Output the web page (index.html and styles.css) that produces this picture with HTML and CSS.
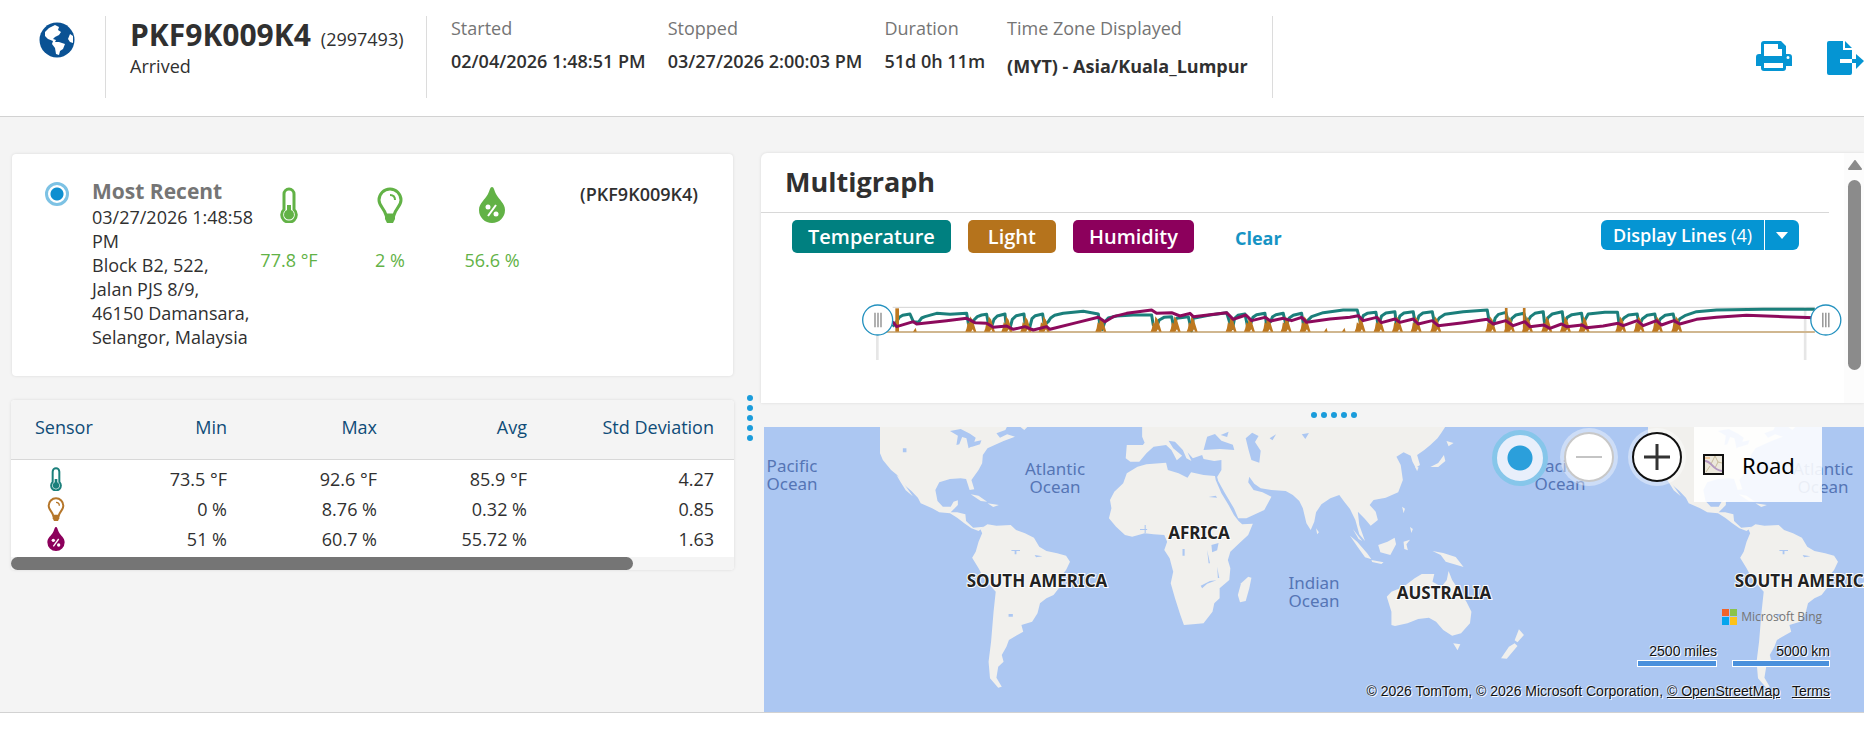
FILE: index.html
```html
<!DOCTYPE html>
<html lang="en">
<head>
<meta charset="utf-8">
<title>Shipment PKF9K009K4</title>
<link rel="stylesheet" href="styles.css">
</head>
<body>
<svg class="defs" aria-hidden="true">
  <symbol id="thermo" viewBox="0 0 18 36">
    <path d="M9 2a5 5 0 0 0-5 5v15.500a7.300 7.300 0 1 0 10 0V7a5 5 0 0 0-5-5z" fill="none" stroke="currentColor" stroke-width="3"/>
    <path d="M7 18h4v5a5 5 0 1 1-4 0z" fill="currentColor"/>
  </symbol>
  <symbol id="bulb" viewBox="0 0 26 36">
    <path d="M13 2A11 11 0 0 0 2 13c0 6 5 8 7 15h8c2-7 7-9 7-15A11 11 0 0 0 13 2z" fill="none" stroke="currentColor" stroke-width="3"/>
    <path d="M8 27h10v5l-2 4h-6l-2-4z" fill="currentColor"/>
    <path d="M13 8c3 0 5 2 5 5" fill="none" stroke="currentColor" stroke-width="2"/>
  </symbol>
  <symbol id="drop" viewBox="0 0 26 36">
    <path d="M13 0c2 0 2 3 4 7 3 6 9 9 9 16a13 13 0 0 1-26 0C0 16 6 13 9 7c2-4 2-7 4-7z" fill="currentColor"/>
    <path d="M9 29l8-11" stroke="#fff" stroke-width="2"/>
    <circle cx="9" cy="20" r="2.500" fill="#fff"/><circle cx="17" cy="27" r="2.500" fill="#fff"/>
  </symbol>
</svg>

<header class="topbar">
  <div class="brand">
    <svg class="globe" viewBox="0 0 36 36" aria-hidden="true">
      <circle cx="18" cy="18" r="17.500" fill="#0a5294"/>
      <path d="M16 3L20 5 19 8 22 10 20 13 16 15 14 17 17 18 16 20 20 20 26 22 24 27 21 29 20 33 17 32 16 26 13 22 14 19 9 17 6 14 6 10 10 6z" fill="#fff"/>
      <path d="M31 12l3 2v7l-3-1-2-3z" fill="#fff"/>
    </svg>
  </div>
  <div class="ident">
    <div class="ident-line"><h1>PKF9K009K4</h1><span>(2997493)</span></div>
    <div>Arrived</div>
  </div>
  <dl class="facts">
    <div><dt>Started</dt><dd>02/04/2026 1:48:51 PM</dd></div>
    <div><dt>Stopped</dt><dd>03/27/2026 2:00:03 PM</dd></div>
    <div><dt>Duration</dt><dd>51d 0h 11m</dd></div>
    <div class="zone"><dt>Time Zone Displayed</dt><dd>(MYT) - Asia/Kuala_Lumpur</dd></div>
  </dl>
  <div class="tools">
    <button type="button" aria-label="Print">
      <svg width="36" height="30" viewBox="0 0 36 30"><path fill="#0595d3" fill-rule="evenodd" d="M8 0h17l5 5v8h3a3 3 0 0 1 3 3v9h-6v2a3 3 0 0 1-3 3H8a3 3 0 0 1-3-3v-2H0v-9a3 3 0 0 1 3-3h2V3a3 3 0 0 1 3-3zM8 3v12h18V8h-4V3zM8 22v5h19v-5zM32 15a1.500 1.500 0 1 0 0 3 1.500 1.500 0 0 0 0-3z"/></svg>
    </button>
    <button type="button" aria-label="Export">
      <svg width="37" height="34" viewBox="0 0 37 34"><path fill="#0595d3" d="M2 0h14v9h9v9H13v4h12v10a2 2 0 0 1-2 2H2a2 2 0 0 1-2-2V2a2 2 0 0 1 2-2zM18 0l7 7h-7zM25 18h4v-5l8 7-8 8v-6h-4z"/></svg>
    </button>
  </div>
</header>

<main class="board">
  <section class="left">
    <article class="card recent">
      <input class="pick" type="radio" name="point" aria-label="Most Recent" checked>
      <div class="where">
        <h2>Most Recent</h2>
        <p>03/27/2026 1:48:58 PM</p>
        <p>Block B2, 522,<br>Jalan PJS 8/9,<br>46150 Damansara,<br>Selangor, Malaysia</p>
      </div>
      <div class="reading"><svg class="big narrow"><use href="#thermo"/></svg><span>77.8 °F</span></div>
      <div class="reading"><svg class="big"><use href="#bulb"/></svg><span>2 %</span></div>
      <div class="reading"><svg class="big"><use href="#drop"/></svg><span>56.6 %</span></div>
      <strong class="tag">(PKF9K009K4)</strong>
    </article>
    <div class="card stats">
      <table>
        <thead><tr><th>Sensor</th><th>Min</th><th>Max</th><th>Avg</th><th>Std Deviation</th></tr></thead>
        <tbody>
          <tr><td><svg class="small teal"><use href="#thermo"/></svg></td><td>73.5 °F</td><td>92.6 °F</td><td>85.9 °F</td><td>4.27</td></tr>
          <tr><td><svg class="small amber"><use href="#bulb"/></svg></td><td>0 %</td><td>8.76 %</td><td>0.32 %</td><td>0.85</td></tr>
          <tr><td><svg class="small plum"><use href="#drop"/></svg></td><td>51 %</td><td>60.7 %</td><td>55.72 %</td><td>1.63</td></tr>
        </tbody>
      </table>
      <div class="hscroll"><div class="hthumb"></div></div>
    </div>
  </section>

  <div class="grip vertical"><i></i><i></i><i></i><i></i><i></i></div>

  <section class="right">
    <div class="graph">
      <div class="graph-body">
        <h2>Multigraph</h2>
        <div class="filters">
          <button type="button" class="chip bg-teal">Temperature</button>
          <button type="button" class="chip bg-amber">Light</button>
          <button type="button" class="chip bg-plum">Humidity</button>
          <button type="button" class="clear">Clear</button>
          <div class="split">
            <button type="button"><b>Display Lines</b> (4)</button>
            <button type="button" class="arrow" aria-label="More"><svg width="12" height="7" viewBox="0 0 12 7"><path d="M0 0h12L6 7z" fill="#fff"/></svg></button>
          </div>
        </div>
        <svg class="chart" viewBox="36 42 2940 170" preserveAspectRatio="xMinYMin meet" aria-hidden="true">
          <defs>
            <path id="spike" d="M-16 0l4-10 3-18 5 4 2-22 8 10 4 14 7 22h-7l-4-7-5 7z" fill="#bd7820"/>
            <path id="blip" d="M-6 0L2-12 5 0z" fill="#bd7820"/>
          </defs>
          <path d="M128 52H2895" stroke="#d3d3d3" stroke-width="3"/>
          <path d="M82 130V210M2866 52V210" stroke="#e6e6e6" stroke-width="8"/>
          <path d="M110 126H2895" stroke="#d0b790" stroke-width="6"/>
          <path d="M128 110L140 95 148 82 158 76 180 72 190 95 205 97 215 84 225 80 260 70 300 73 350 70 355 100 365 110 372 90 382 80 395 75 410 73 414 95 425 110 432 88 442 78 465 72 468 100 480 115 487 88 499 77 522 72 525 100 540 110 546 86 556 77 578 72 583 105 595 95 602 84 614 76 640 70 700 64 745 72 750 105 757 118 765 95 775 84 800 78 850 75 905 75 910 105 920 110 928 90 942 82 965 80 970 105 980 85 1015 80 1025 122 1030 85 1080 75 1130 68 1140 100 1148 115 1154 85 1164 76 1185 72 1192 105 1203 100 1209 82 1220 74 1245 70 1250 105 1262 95 1268 80 1278 74 1300 70 1308 105 1318 84 1330 76 1355 70 1360 100 1370 95 1385 80 1420 68 1480 60 1522 60 1532 100 1540 77 1552 70 1578 67 1585 108 1595 78 1608 69 1635 65 1640 108 1650 78 1662 69 1690 65 1697 108 1707 78 1719 69 1747 65 1755 105 1768 84 1785 73 1840 65 1912 60 1918 95 1930 105 1936 84 1946 73 1968 67 1978 108 1986 85 1998 75 2022 70 2030 100 2042 80 2055 70 2080 65 2085 108 2095 82 2107 72 2137 65 2142 105 2152 82 2166 74 2195 70 2200 100 2215 72 2265 67 2303 67 2308 105 2322 84 2336 75 2362 72 2368 108 2378 86 2392 76 2415 72 2422 105 2432 86 2446 76 2470 72 2478 106 2490 86 2505 77 2540 65 2600 60 2740 58 2895 58" fill="none" stroke="#1b7f7b" stroke-width="9" stroke-linejoin="round"/>
          <path d="M136 125V55h11v70z" fill="#bd7820"/><path d="M1965 125V54h8v71zM2019 125V54h8v71z" fill="#bd7820"/>
          <g>
            <use href="#blip" x="195" y="125"/><use href="#spike" x="362" y="125"/><use href="#spike" x="418" y="125"/><use href="#spike" x="470" y="125"/><use href="#spike" x="527" y="125"/><use href="#spike" x="582" y="125"/><use href="#spike" x="752" y="125"/><use href="#spike" x="918" y="125"/><use href="#spike" x="975" y="125"/><use href="#spike" x="1026" y="125"/><use href="#spike" x="1143" y="125"/><use href="#spike" x="1198" y="125"/><use href="#spike" x="1253" y="125"/><use href="#spike" x="1308" y="125"/><use href="#spike" x="1365" y="125"/><use href="#blip" x="1428" y="125"/><use href="#blip" x="1482" y="125"/><use href="#spike" x="1530" y="125"/><use href="#spike" x="1587" y="125"/><use href="#spike" x="1642" y="125"/><use href="#spike" x="1698" y="125"/><use href="#spike" x="1757" y="125"/><use href="#spike" x="1922" y="125"/><use href="#spike" x="1978" y="125"/><use href="#spike" x="2032" y="125"/><use href="#spike" x="2090" y="125"/><use href="#spike" x="2146" y="125"/><use href="#spike" x="2202" y="125"/><use href="#spike" x="2312" y="125"/><use href="#spike" x="2367" y="125"/><use href="#spike" x="2422" y="125"/><use href="#spike" x="2480" y="125"/>
          </g>
          <path d="M128 95L140 110 190 95 200 102 290 92 350 85 375 98 410 100 430 112 470 108 490 118 525 110 550 120 590 110 600 118 680 98 745 82 765 95 790 80 830 70 905 60 920 70 965 68 990 78 1020 70 1030 80 1130 68 1150 88 1188 75 1205 92 1245 82 1262 93 1300 85 1325 92 1355 82 1370 97 1440 87 1500 82 1525 77 1540 92 1580 82 1595 98 1635 87 1650 97 1690 87 1705 102 1747 92 1765 107 1840 98 1912 88 1930 102 1968 92 1990 107 2025 95 2040 110 2082 105 2100 115 2135 102 2150 110 2197 105 2210 113 2260 108 2305 100 2320 107 2362 92 2380 107 2420 92 2435 105 2472 92 2490 102 2540 88 2600 82 2690 76 2800 80 2895 83" fill="none" stroke="#8c0a5c" stroke-width="9" stroke-linejoin="round"/>
          <g fill="#fff" stroke="#2391bf" stroke-width="4"><circle cx="83" cy="90" r="45"/><circle cx="2928" cy="90" r="45"/></g>
          <path d="M75 68v44M84 68v44M93 68v44M2919 68v44M2928 68v44M2937 68v44" stroke="#8a8a8a" stroke-width="4"/>
        </svg>
      </div>
      <div class="vscroll"><svg width="14" height="10" viewBox="0 0 14 10"><path d="M7 1l6 8H1z" fill="#8b8b8b" stroke="#8b8b8b" stroke-width="2" stroke-linejoin="round"/></svg><div class="vthumb"></div></div>
    </div>
    <div class="grip"><i></i><i></i><i></i><i></i><i></i></div>
    <div class="map">
      <svg class="world" viewBox="764 427 1100 285" preserveAspectRatio="xMinYMin slice" role="img" aria-label="World map">
        <defs>
          <g id="land" transform="translate(750 395) scale(.35714 .33333)">
            <g fill="#f1f0ed">
            <path d="M364 90L364 175 372 195 395 225 412 240 430 268 452 288 470 308 478 325 510 340 530 352 560 355 580 368 600 385 620 400 640 408 655 395 625 398 605 378 603 358 580 352 562 352 582 330 582 316 570 320 562 335 540 335 525 318 519 285 530 262 560 252 590 250 605 252 615 285 628 283 620 255 640 225 650 205 652 180 665 160 685 150 710 138 742 125 720 118 700 128 690 115 715 105 722 90z"/>
            <path d="M410 240l12 12 22 34 12 18-20-18-14-24zM618 298l22 4 24 18-18-2zM665 325l32 5-16 6zM750 90h32l-14 15z"/>
            <path d="M645 402L665 388 690 392 730 390 745 405 770 415 795 428 810 455 830 468 860 475 885 482 896 500 885 525 870 545 868 575 850 600 830 610 812 625 805 655 790 680 760 690 765 710 745 722 725 735 718 755 705 780 710 800 695 815 690 848 705 875 695 878 672 850 668 800 675 740 682 650 688 590 655 550 640 520 622 488 632 470 640 440 650 415z"/>
            <path d="M1085 215L1110 208 1165 203 1170 225 1200 235 1225 248 1235 232 1270 240 1302 243 1304 255 1320 295 1340 330 1355 360 1368 378 1378 388 1408 386 1395 420 1370 445 1345 470 1338 495 1345 520 1342 555 1315 580 1315 610 1300 625 1295 650 1270 685 1240 688 1215 690 1205 660 1190 610 1178 565 1185 530 1175 490 1160 465 1168 440 1160 420 1130 418 1105 415 1070 425 1050 420 1025 395 1005 370 1012 340 1008 315 1020 290 1045 265 1055 235z"/>
            <path d="M1395 545l9 3-6 32-10 38-16 4-6-22 9-35z"/>
            <path d="M1055 150L1100 150 1105 143 1098 125 1098 90 1950 90 1935 115 1925 130 1905 150 1888 165 1868 180 1876 210 1864 218 1855 200 1850 182 1830 172 1810 185 1822 210 1828 255 1815 292 1780 308 1746 315 1735 330 1752 350 1758 375 1738 392 1722 372 1702 350 1706 390 1722 438 1706 418 1695 375 1680 342 1665 322 1650 300 1625 310 1600 328 1585 352 1580 380 1570 405 1558 385 1548 340 1538 318 1520 300 1500 288 1460 285 1430 280 1412 266 1398 245 1395 262 1410 285 1435 292 1460 305 1440 345 1390 370 1367 370 1355 340 1330 295 1311 258 1308 246 1320 225 1320 195 1300 198 1270 192 1266 180 1240 190 1225 172 1236 198 1222 190 1212 165 1190 140 1172 137 1185 160 1210 182 1195 196 1180 165 1165 150 1130 155 1110 175 1090 200 1065 200 1052 190z"/>
            <path d="M1585 400l8 12-5 6zM1680 422l20 18 28 35 12 18-18-6-20-30zM1740 495l34 7-6 5-26-6zM1759 450l26-10 20-12 4 20-16 32-28-8zM1830 440l18-6-10 14 4 18-10-4zM1911 468l30 6 35 12 22 30-26-8-24-8-14-20zM1826 335l8 6-4 14zM1848 396l8 6-4 12zM1688 402l26 36-10-6z"/>
            <path d="M1783 605L1796 590 1830 575 1861 550 1881 537 1916 537 1911 560 1936 575 1951 555 1956 528 1966 555 1981 580 2006 620 2020 650 2016 685 1991 715 1966 722 1941 705 1921 680 1901 668 1871 672 1841 685 1806 693 1796 690 1796 650z"/>
            <path d="M1969 745l20 3-8 18zM2153 703l14 17-18 22-8-6zM2141 745l8 8-30 38-16-1 22-35zM1950 138l20 6-14 10zM1943 180l4 18-20 18-22 0 22-12z"/>
            <path d="M1862 215l10 2-4 12z"/>
            </g>
            <g fill="#acc7f2">
            <path d="M560 108l30-6 26 14 16 12-8 24-12 8-6-30-12-4-8 22-8 2 4-28zM622 142l26-6-4 12-24 8z"/>
            <path d="M1270 165l10-40 22-8 18 20 32 12 4 16-40-3zM1318 120l22-10-4 16z"/>
            <path d="M1388 130l18-17 18 10-10 18 16 26-4 36-22-8-8-30zM1455 130l18-12-10 18zM1545 118l20-4-10 18z"/>
            <path d="M1292 450l20-6-4 22-14 6zM1280 465l8 40-4 0zM1308 515l6 34-4 0zM1262 572l26-14 18-2-26 10-14 14zM1284 306l20-4 4 6z"/>
            <path d="M428 160h10v12h-10zM732 465h24v3h-10v10h-5v-10h-9zM724 657h12v8h-12zM1105 390h3v24h-3zM1092 402h20v3h-20zM797 480l22 4-18 3zM1211 462h6v20h-6z"/>
            </g>
          </g>
          <g id="names">
            <g class="sea"><text x="792" y="472">Pacific</text><text x="792" y="490">Ocean</text><text x="1055" y="475">Atlantic</text><text x="1055" y="493">Ocean</text><text x="1314" y="589">Indian</text><text x="1314" y="607">Ocean</text></g>
            <g class="continent"><text x="1037" y="587">SOUTH AMERICA</text><text x="1199" y="539">AFRICA</text><text x="1444" y="599">AUSTRALIA</text></g>
          </g>
        </defs>
        <use href="#land"/><use href="#land" x="768"/>
        <use href="#names"/><use href="#names" x="768"/>
      </svg>
      <div class="controls">
        <button type="button" class="locate" aria-label="Locate"></button>
        <button type="button" class="round off" aria-label="Zoom out"><svg width="26" height="26" viewBox="0 0 26 26"><path d="M0 13h26" stroke="#c4c4c4" stroke-width="2"/></svg></button>
        <button type="button" class="round" aria-label="Zoom in"><svg width="26" height="26" viewBox="0 0 26 26"><path d="M0 13h26M13 0v26" stroke="#333" stroke-width="3"/></svg></button>
        <button type="button" class="road"><svg width="21" height="21" viewBox="0 0 21 21"><rect x="1" y="1" width="19" height="19" fill="#ece8dc" stroke="#111" stroke-width="2"/><path d="M2 7l6 3 4-8M12 2l3 6 4 1M3 18l4-6M15 8l-3 6" fill="none" stroke="#c9bd9c"/><path d="M2 7c7 0 7 9 17 10" fill="none" stroke="#b59ac2" stroke-width="2"/><path d="M2 4h5" stroke="#f0a860"/></svg>Road</button>
      </div>
      <div class="credits">
        <div class="bing"><svg width="15" height="16" viewBox="0 0 15 16"><path fill="#f1632a" d="M0 0h7v7H0z"/><path fill="#8bc34a" d="M8 0h7v7H8z"/><path fill="#06a5ee" d="M0 8h7v8H0z"/><path fill="#fcc21a" d="M8 8h7v8H8z"/></svg>Microsoft Bing</div>
        <div class="scales"><span class="miles">2500 miles</span><span class="km">5000 km</span></div>
        <div class="legal">© 2026 TomTom, © 2026 Microsoft Corporation, <a href="#osm">© OpenStreetMap</a> <a class="terms" href="#terms">Terms</a></div>
      </div>
    </div>
  </section>
</main>
</body>
</html>
```
FILE: styles.css
```css
* { box-sizing: border-box; }
body { margin: 0; background: #fff; color: #303030; font: 18px/24px "Open Sans", sans-serif; }
h1, h2, p, dl, dd { margin: 0; }
button { font: inherit; border: 0; padding: 0; background: none; cursor: pointer; }
svg { display: block; }
.defs { width: 0; height: 0; position: absolute; }

.topbar { display: flex; min-height: 117px; padding-top: 16px; border-bottom: 1px solid #d2d2d2; }
.brand { width: 106px; height: 82px; padding: 6px 0 0 39px; border-right: 1px solid #dcdcdc; }
.globe { width: 36px; height: 36px; }
.ident { width: 321px; height: 82px; padding: 0 0 0 24px; border-right: 1px solid #dcdcdc; }
.ident-line { display: flex; align-items: baseline; gap: 10px; height: 38px; }
h1 { font-size: 30px; line-height: 38px; }
.facts { display: flex; gap: 22px; height: 82px; padding: 0 24px; border-right: 1px solid #dcdcdc; }
.facts dt { color: #757575; }
.facts dd { font-weight: 600; padding-top: 9px; }
.facts .zone dd { font-weight: 700; padding-top: 14px; }
.tools { display: flex; gap: 35px; margin-left: auto; align-items: flex-start; padding-top: 25px; }

.board { display: grid; grid-template-columns: 724fr 26px 1103fr; padding-left: 11px; background: #f4f4f4; border-bottom: 1px solid #d2d2d2; }
.left { padding-top: 37px; }
.card { background: #fff; border-radius: 4px; box-shadow: 0 0 3px #d8d8d8; }
.recent { display: flex; margin: 0 2px 24px 1px; min-height: 222px; padding: 25px 35px 0 33px; }
.pick { appearance: none; flex: none; width: 24px; height: 24px; margin: 3px 23px 0 0; border-radius: 50%; border: 3px solid #7dc2e4; background: radial-gradient(circle, #0e8fd0 6px, #fff 7px); }
.where { width: 164px; }
.where h2 { font-size: 21px; line-height: 24px; color: #757575; padding-bottom: 2px; }
.reading { width: 102px; display: flex; flex-direction: column; align-items: center; gap: 25px; padding-top: 8px; color: #62b246; }
.where + .reading { width: 66px; margin-right: 17px; white-space: nowrap; }
.big { width: 26px; height: 36px; }
.big.narrow { width: 18px; }
.tag { margin-left: auto; font-weight: 600; padding-top: 3px; }
.stats { overflow: hidden; margin-right: 1px; }
table { width: 100%; border-collapse: collapse; table-layout: fixed; }
th { height: 59px; background: #f4f4f4; color: #0f4c78; font-weight: 400; text-align: right; padding: 0 20px 4px 0; border-bottom: 1px solid #d8d8d8; }
th:nth-child(1) { width: 89px; text-align: left; padding-left: 24px; padding-right: 0; }
th:nth-child(2) { width: 147px; }
th:nth-child(3), th:nth-child(4) { width: 150px; }
td { height: 30px; padding: 0 20px 0 0; text-align: right; }
td:first-child { padding: 0; }
tbody tr:first-child td { height: 35px; padding-top: 5px; }
.small { width: 18px; height: 24px; margin: 0 auto; }
.teal { color: #1b7f7b; }
.amber { color: #b5762a; }
.plum { color: #8c005c; }
.hscroll { background: #f4f4f4; margin-top: 3px; }
.hthumb { width: 86%; height: 13px; border-radius: 7px; background: #757575; }

.grip { display: flex; align-items: center; justify-content: center; gap: 4px; height: 24px; padding-left: 43px; }
.grip i { width: 6px; height: 6px; border-radius: 50%; background: #1a9cdb; }
.grip.vertical { flex-direction: column; height: auto; padding: 0 0 0 4px; margin-top: 7px; }

.right { padding-top: 36px; min-width: 0; }
.graph { display: flex; min-height: 250px; background: #fff; border-radius: 6px 0 0; box-shadow: 0 0 3px #d8d8d8; }
.graph-body { flex: 1; min-width: 0; }
.graph h2 { font-size: 27px; line-height: 36px; padding: 11px 0 12px 24px; margin-right: 15px; border-bottom: 1px solid #d8d8d8; }
.filters { display: flex; gap: 17px; padding: 7px 45px 0 31px; align-items: flex-start; }
.chip { height: 33px; min-width: 88px; padding: 0 16px; border-radius: 5px; color: #fff; font-size: 20px; font-weight: 600; }
.bg-teal { background: #008080; }
.bg-amber { background: #b5731c; }
.bg-plum { background: #8c005c; }
.clear { color: #1594c4; font-weight: 700; height: 36px; margin-left: 24px; }
.split { display: flex; margin-left: auto; height: 30px; border-radius: 6px; overflow: hidden; background: #0595d3; }
.split button { color: #fff; padding: 0 12px; white-space: nowrap; }
.split b { font-weight: 600; }
.split .arrow { width: 35px; padding: 0 0 0 11px; border-left: 1px solid #fff; }
.chart { width: calc(100% - 103px); margin: 48px 0 0 101px; }
.vscroll { width: 20px; background: #fcfcfc; padding: 7px 2px 0 4px; display: flex; flex-direction: column; gap: 10px; }
.vthumb { width: 13px; height: 190px; border-radius: 7px; background: #8b8b8b; }

.map { position: relative; margin-left: 3px; height: 285px; background: #acc7f2; overflow: hidden; }
.world { width: 100%; height: 100%; }
.sea { font: 17px "Noto Sans", sans-serif; fill: #5575b5; text-anchor: middle; }
.continent { font: 700 17px "Noto Sans", sans-serif; fill: #222; text-anchor: middle; stroke: #fff; stroke-width: 2px; paint-order: stroke; }
.controls { position: absolute; top: 0; right: 42px; display: flex; align-items: flex-start; }
.locate { width: 56px; height: 56px; margin: 3px 16px 0 0; border-radius: 50%; border: 5px solid #86c6ea; background: radial-gradient(circle, #2b9fdb 12px, #e8effb 13px); }
.round { width: 50px; height: 50px; margin: 5px 18px 0 0; border-radius: 50%; border: 2px solid #111; background: #fff; display: grid; place-items: center; box-shadow: 0 0 0 4px rgba(255, 255, 255, .4); }
.round + .round { margin-right: 12px; }
.off { border-color: #c8c8c8; }
.road { display: flex; align-items: center; gap: 18px; width: 128px; height: 75px; padding-left: 9px; background: rgba(255, 255, 255, .88); color: #000; font: 22px "Noto Sans", sans-serif; }
.credits { position: absolute; right: 34px; bottom: 12px; display: flex; flex-direction: column; align-items: flex-end; color: #111; font: 14px/18px "Liberation Sans", sans-serif; text-shadow: 1px 1px 0 #fff, -1px -1px 0 rgba(255, 255, 255, .5); }
.bing { display: flex; align-items: center; gap: 4px; margin: 0 8px 16px 0; color: #757575; font: 12px/18px "Open Sans", sans-serif; text-shadow: none; }
.scales { display: flex; gap: 15px; margin-bottom: 15px; }
.scales span { text-align: right; }
.scales span::after { content: ""; display: block; height: 5px; background: #4a90dc; border: 1px solid #fff; }
.miles { width: 80px; }
.km { width: 98px; }
.legal a { color: inherit; }
.terms { margin-left: 8px; }
```
